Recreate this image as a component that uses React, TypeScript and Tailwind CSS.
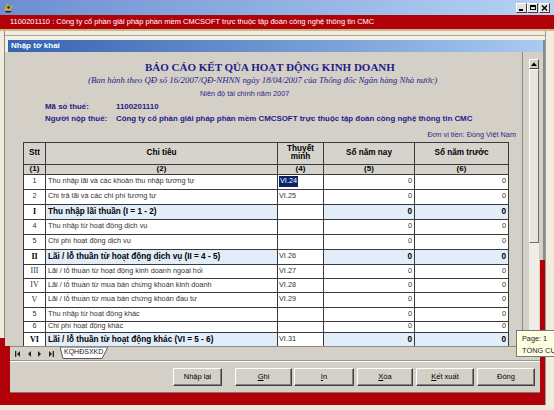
import React from 'react';

type Row = {
  stt: string;
  roman?: boolean;
  name: string;
  tm?: string;
  bold?: boolean;
  sel?: boolean;
  h: string;
};

const rows: Row[] = [
  { stt: '1', name: 'Thu nhập lãi và các khoản thu nhập tương tự', tm: 'VI.24', sel: true, h: 'h-[15px]' },
  { stt: '2', name: 'Chi trả lãi và các chi phí tương tự', tm: 'VI.25', h: 'h-[15px]' },
  { stt: 'I', roman: true, bold: true, name: 'Thu nhập lãi thuần (I = 1 - 2)', h: 'h-[15px]' },
  { stt: '4', name: 'Thu nhập từ hoạt động dịch vụ', h: 'h-[15px]' },
  { stt: '5', name: 'Chi phí hoạt động dịch vụ', h: 'h-[15px]' },
  { stt: 'II', roman: true, bold: true, name: 'Lãi / lỗ thuần từ hoạt động dịch vụ (II = 4 - 5)', tm: 'VI.26', h: 'h-[15px]' },
  { stt: 'III', roman: true, name: 'Lãi / lỗ thuần từ hoạt động kinh doanh ngoại hối', tm: 'VI.27', h: 'h-[14px]' },
  { stt: 'IV', roman: true, name: 'Lãi / lỗ thuần từ mua bán chứng khoán kinh doanh', tm: 'VI.28', h: 'h-[14px]' },
  { stt: 'V', roman: true, name: 'Lãi / lỗ thuần từ mua bán chứng khoán đầu tư', tm: 'VI.29', h: 'h-[15px]' },
  { stt: '5', name: 'Thu nhập từ hoạt động khác', h: 'h-[14px]' },
  { stt: '6', name: 'Chi phí hoạt động khác', h: 'h-[11px]' },
  { stt: 'VI', roman: true, bold: true, name: 'Lãi / lỗ thuần từ hoạt động khác (VI = 5 - 6)', tm: 'VI.31', h: 'h-[15px]' },
];

const cell = 'border-r border-b border-[#3a3a3a] flex items-center overflow-hidden whitespace-nowrap';

function Logo() {
  return (
    <svg width="11" height="11" viewBox="0 0 11 11">
      <path d="M1 8 L5 1 L6 5 L10 3 L7 9 Z" fill="#d8b020" />
      <path d="M2 9 L9 9 L7 10.5 L3 10.5 Z" fill="#202020" />
      <circle cx="5.5" cy="5.5" r="1.3" fill="#202020" />
    </svg>
  );
}

function WinBtn({ kind }: { kind: 'min' | 'max' | 'close' }) {
  return (
    <div className="w-[11px] h-[10px] bg-[#e4e2dc] border border-t-white border-l-white border-r-[#404040] border-b-[#404040] flex items-center justify-center">
      {kind === 'min' && <div className="w-[4px] h-[2px] bg-black mt-[4px] -ml-[1px]" />}
      {kind === 'max' && <div className="w-[6px] h-[5px] border border-black border-t-2" />}
      {kind === 'close' && (
        <svg width="7" height="6" viewBox="0 0 7 6">
          <path d="M1 0.5 L6 5.5 M6 0.5 L1 5.5" stroke="#000" strokeWidth="1.4" />
        </svg>
      )}
    </div>
  );
}

function NavIcon({ dir, bar }: { dir: 'l' | 'r'; bar?: boolean }) {
  return (
    <svg width="8" height="8" viewBox="0 0 8 8">
      {dir === 'l' ? (
        <>
          {bar && <rect x="1" y="1" width="1.3" height="6" fill="#222" />}
          <path d="M6 1 L6 7 L3 4 Z" fill="#222" />
        </>
      ) : (
        <>
          <path d="M2 1 L2 7 L5 4 Z" fill="#222" />
          {bar && <rect x="5.7" y="1" width="1.3" height="6" fill="#222" />}
        </>
      )}
    </svg>
  );
}

function Btn({ children, w, ml }: { children: React.ReactNode; w: string; ml: string }) {
  return (
    <div className={`${w} ${ml} h-[18px] bg-[#d4d0c8] border border-t-white border-l-white border-r-[#404040] border-b-[#404040] flex items-center justify-center text-[7.5px] text-black shadow-[inset_-1px_-1px_0_#808080]`}>
      {children}
    </div>
  );
}

export default function App() {
  return (
    <div className="w-[554px] h-[410px] overflow-hidden bg-[#ece9d8] flex flex-col relative font-['Liberation_Sans',Arial,sans-serif]">
      {/* Title bar */}
      <div className="h-[15px] flex items-center bg-linear-to-r from-[#6d8ed0] to-[#b6d3f5] pl-[3px] pr-[4px]">
        <Logo />
        <div className="flex-1" />
        <div className="flex items-center">
          <WinBtn kind="min" />
          <WinBtn kind="max" />
          <div className="w-[1px]" />
          <WinBtn kind="close" />
        </div>
      </div>

      {/* Red banner */}
      <div className="h-[14px] bg-[#b10008] text-white text-[7.5px] pl-[10px] flex items-center whitespace-nowrap">
        1100201110 : Công ty cổ phần giải pháp phần mềm CMCSOFT trực thuộc tập đoàn công nghệ thông tin CMC
      </div>
      <div className="h-[2px] bg-[#cbb88e]" />

      {/* Middle */}
      <div className="h-[374px] flex">
        {/* col A */}
        <div className="w-[5px] flex flex-col">
          <div className="flex-1 bg-[#f1eddc] border-r border-[#8a8a8a]" />
          <div className="h-[67px] bg-[#b10008]" />
        </div>

        {/* col B */}
        <div className="w-[540px] flex flex-col">
          <div className="h-[4px] bg-[#f1eddc]" />
          <div className="h-[5px] bg-[#f3f0e4] border-t border-[#a8a8a0]" />
          {/* child title */}
          <div className="h-[12px] flex">
            <div className="w-[3px] bg-[#f3f0e4]" />
            <div className="w-[535px] bg-linear-to-r from-[#3563b0] to-[#a9caf1] flex items-center pl-[3px] text-white font-bold text-[8px]">
              Nhập tờ khai
            </div>
            <div className="flex-1 bg-[#8a8a8a]" />
          </div>

          {/* body */}
          <div className="h-[341px] flex">
            <div className="w-[535px] flex flex-col">
              {/* sheet row */}
              <div className="h-[294px] flex bg-[#d4d0c8]">
                <div className="w-[518px] border-r border-[#8c8a84] overflow-hidden flex flex-col">
                  <div className="h-[14px] mt-[8px] flex items-center pl-[140px] whitespace-nowrap font-['Liberation_Serif',serif] font-bold text-[11px] text-[#1e2088]">
                    BÁO CÁO KẾT QỦA HOẠT ĐỘNG KINH DOANH
                  </div>
                  <div className="h-[14px] flex items-center pl-[83px] whitespace-nowrap font-['Liberation_Serif',serif] italic text-[8.8px] text-[#1e2088]">
                    (Ban hành theo QĐ số 16/2007/QĐ-NHNN ngày 18/04/2007 của Thống đốc Ngân hàng Nhà nước)
                  </div>
                  <div className="h-[12px] mt-[2px] flex items-center pl-[195px] whitespace-nowrap text-[7.3px] text-[#2a2a88]">
                    Niên độ tài chính năm 2007
                  </div>
                  <div className="h-[12px] mt-[1px] flex items-center pl-[40px] whitespace-nowrap font-bold text-[7.9px] text-[#1e2088]">
                    <div className="w-[71px]">Mã số thuế:</div>
                    <div>1100201110</div>
                  </div>
                  <div className="h-[12px] flex items-center pl-[40px] whitespace-nowrap font-bold text-[7.9px] text-[#1e2088]">
                    <div className="w-[71px]">Người nộp thuế:</div>
                    <div>Công ty cổ phần giải pháp phần mềm CMCSOFT trực thuộc tập đoàn công nghệ thông tin CMC</div>
                  </div>
                  <div className="h-[12px] mt-[5px] flex items-center justify-end pr-[6px] whitespace-nowrap text-[7.3px] text-[#2a2a88]">
                    Đơn vị tiền: Đồng Việt Nam
                  </div>

                  {/* Table */}
                  <div className="mt-[1px] ml-[18px] w-[486px] border-l border-t border-[#3a3a3a] flex flex-col text-[7.3px]">
                    <div className="h-[22px] flex bg-[#d6d3cc] font-bold text-black text-[8.2px]">
                      <div className={`${cell} w-[22px] justify-center`}>Stt</div>
                      <div className={`${cell} w-[232px] justify-center`}>Chi tiêu</div>
                      <div className={`${cell} w-[46px] justify-center text-center leading-[8px] whitespace-normal`}>Thuyết<br />minh</div>
                      <div className={`${cell} w-[91px] justify-center`}>Số năm nay</div>
                      <div className={`${cell} w-[94px] justify-center`}>Số năm trước</div>
                    </div>
                    <div className="h-[10px] flex bg-[#d6d3cc] font-bold text-black text-[8px]">
                      <div className={`${cell} w-[22px] justify-center`}>(1)</div>
                      <div className={`${cell} w-[232px] justify-center`}>(2)</div>
                      <div className={`${cell} w-[46px] justify-center`}>(4)</div>
                      <div className={`${cell} w-[91px] justify-center`}>(5)</div>
                      <div className={`${cell} w-[94px] justify-center`}>(6)</div>
                    </div>
                    {rows.map((r, i) => {
                      const hl = r.bold ? 'bg-[#e1edf9]' : 'bg-white';
                      const tw = r.bold ? 'font-bold text-black text-[8.2px]' : 'text-[#333]';
                      return (
                        <div key={i} className={`${r.h} flex shrink-0`}>
                          <div className={`${cell} w-[22px] justify-center bg-white ${tw} ${r.roman ? "font-['Liberation_Serif',serif] text-[8px]" : ''}`}>
                            {r.stt}
                          </div>
                          <div className={`${cell} w-[232px] pl-[2px] ${hl} ${tw}`}>{r.name}</div>
                          <div className={`${cell} w-[46px] pl-[1px] bg-white text-[#333]`}>
                            {r.tm && (r.sel ? <span className="bg-[#0a246a] text-white px-[1px]">{r.tm}</span> : r.tm)}
                          </div>
                          <div className={`${cell} w-[91px] justify-end pr-[2px] ${hl} ${tw}`}>0</div>
                          <div className={`${cell} w-[94px] justify-end pr-[2px] ${hl} ${tw}`}>0</div>
                        </div>
                      );
                    })}
                  </div>
                </div>
                <div className="w-[6px]" />
                {/* scrollbar */}
                <div className="w-[10px] flex flex-col pt-[7px]">
                  <div className="h-[10px] bg-[#d4d0c8] border border-t-white border-l-white border-r-[#404040] border-b-[#404040] flex items-center justify-center">
                    <svg width="6" height="4" viewBox="0 0 6 4"><path d="M0 4 L3 0.5 L6 4 Z" fill="#000" /></svg>
                  </div>
                  <div className="h-[174px] bg-[#e6e4dd] border border-t-white border-l-white border-r-[#707070] border-b-[#707070]" />
                  <div className="flex-1 bg-[#eeede8]" />
                </div>
                <div className="w-[1px]" />
              </div>

              {/* lower */}
              <div className="flex-1 flex">
                <div className="w-[5px] bg-[#b10008]" />
                <div className="flex-1 flex flex-col bg-[#d4d0c8]">
                  {/* tab bar */}
                  <div className="h-[14px] flex items-center pl-[3px] border-t border-[#8c8a84]">
                    <div className="flex items-center gap-[2px]">
                      <div className="w-[9px] flex justify-center"><NavIcon dir="l" bar /></div>
                      <div className="w-[9px] flex justify-center"><NavIcon dir="l" /></div>
                      <div className="w-[9px] flex justify-center"><NavIcon dir="r" /></div>
                      <div className="w-[9px] flex justify-center"><NavIcon dir="r" bar /></div>
                    </div>
                    <div className="ml-[5px] relative h-[12px] w-[48px] -mt-[2px]">
                      <svg width="48" height="12" viewBox="0 0 48 12" className="absolute inset-0">
                        <path d="M0 0 L48 0 L42 11.5 L3 11.5 Z" fill="#fff" stroke="#555" strokeWidth="1" />
                      </svg>
                      <div className="relative pl-[4px] h-full flex items-center text-[7px] text-[#222]">KQHĐSXKD</div>
                    </div>
                  </div>
                  {/* button panel */}
                  <div className="flex-1 flex flex-col">
                    <div className="h-[2px] border-t border-[#9a978f] border-b border-b-white" />
                    <div className="flex-1 flex items-start pt-[6px] border-b border-[#7a7870]">
                      <Btn w="w-[49px]" ml="ml-[163px]">Nhập lại</Btn>
                      <Btn w="w-[57px]" ml="ml-[13px]"><span className="underline">G</span>hi</Btn>
                      <Btn w="w-[60px]" ml="ml-[2px]"><span className="underline">I</span>n</Btn>
                      <Btn w="w-[56px]" ml="ml-[3px]"><span className="underline">X</span>óa</Btn>
                      <Btn w="w-[58px]" ml="ml-[3px]"><span className="underline">K</span>ết xuất</Btn>
                      <Btn w="w-[58px]" ml="ml-[3px]">Đóng</Btn>
                    </div>
                  </div>
                </div>
              </div>
            </div>
            {/* right col */}
            <div className="w-[5px] flex flex-col">
              <div className="h-[208px] bg-[#d4d0c8] border-r-2 border-[#8a8a8a]" />
              <div className="flex-1 bg-[#b10008]" />
            </div>
          </div>
          <div className="h-[12px] bg-[#b10008]" />
        </div>

        {/* col C */}
        <div className="flex-1 bg-[#f1eddc] border-l border-[#9a9a9a]" />
      </div>

      <div className="flex-1 bg-[#ece9d8]" />

      {/* Tooltip */}
      <div className="absolute left-[516px] top-[330px] w-[44px] h-[27px] bg-[#ffffe1] border border-[#7a7a7a] pl-[5px] pt-[2px] text-[7.3px] text-[#222] leading-[12px] whitespace-nowrap overflow-hidden">
        <div>Page: 1</div>
        <div>TỔNG CỤC</div>
      </div>
    </div>
  );
}
